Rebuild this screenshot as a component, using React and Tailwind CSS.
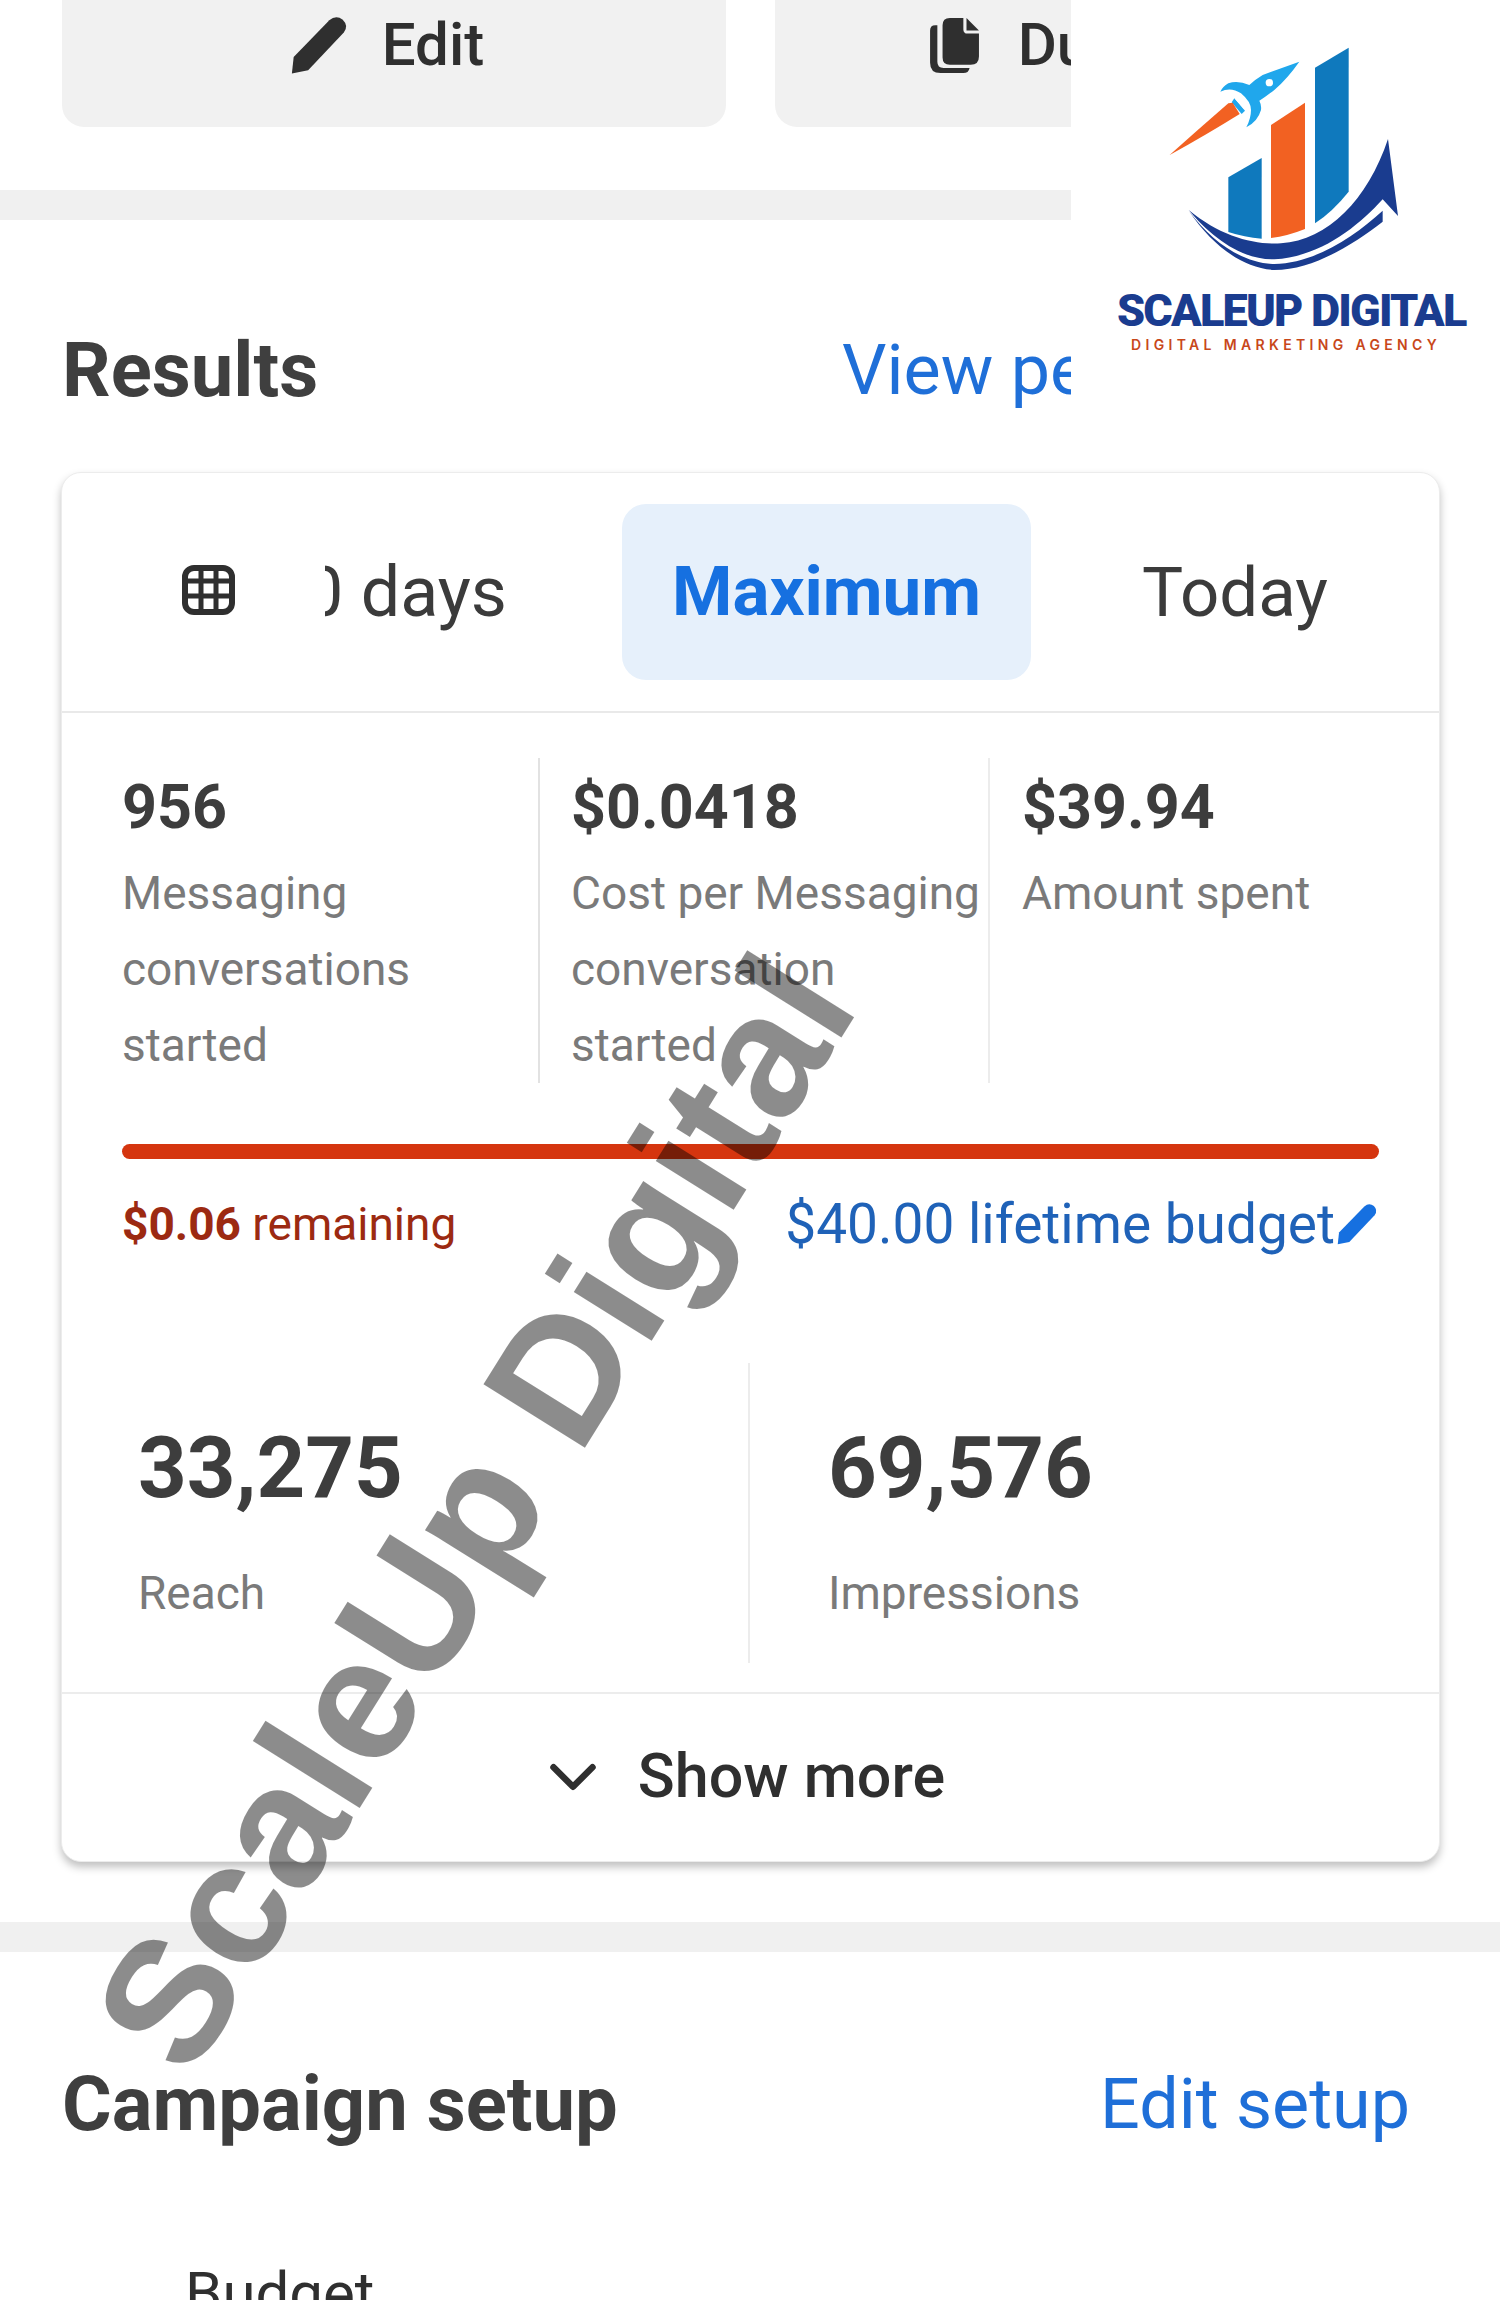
import { ChevronDown } from "lucide-react";

const PencilIcon = ({ className }) => (
  <svg viewBox="0 0 24 24" className={className} fill="currentColor">
    <path d="M1.5 23 L2.2 16.6 L16 2.4 Q18.6 0.2 21.2 2.2 Q23.6 4.6 21.6 7.2 L7.8 21.8 Z" />
  </svg>
);

const CopyIcon = ({ className }) => (
  <svg viewBox="0 0 50 54" className={className} fill="currentColor">
    <path d="M14 8 Q14 1 21 1 L34 1 L34 12 Q34 16 38 16 L49 16 L49 38 Q49 46 41 46 L21 46 Q14 46 14 39 Z" />
    <path d="M37 1 L49 13 L37 13 Z" />
    <path d="M2 13 Q2 8 7 8 L9 8 L9 43 Q9 49 15 49 L40 49 Q39 54 34 54 L12 54 Q2 54 2 44 Z" />
  </svg>
);

const CalendarIcon = () => (
  <svg viewBox="0 0 53 50" className="w-[53px] h-[50px] -mt-[5px] text-[#2f2f2f]" fill="none" stroke="currentColor">
    <rect x="3" y="3" width="47" height="44" rx="9" strokeWidth="6" />
    <path d="M3 16 H50 M3 31 H50 M19 5 V45 M34 5 V45" strokeWidth="5" />
  </svg>
);

const Logo = () => (
  <svg viewBox="0 0 840 750" className="absolute left-[70px] top-[30px] w-[280px] h-[250px]">
    <path d="M522 113 L623 53 L623 485 Q575 545 522 580 Z" fill="#0f79bd" />
    <path d="M390 285 L492 218 L492 597 Q440 618 390 624 Z" fill="#f26122" />
    <path d="M262 442 L362 384 L362 626 Q310 622 262 606 Z" fill="#0f79bd" />
    <path d="M143 540 C240 620 340 645 420 640 C560 630 680 510 741 327 L771 558 L725 508 C650 590 540 680 400 688 C300 690 210 620 143 540 Z" fill="#1a3c8f" />
    <path d="M145 545 C210 640 300 715 400 720 C520 720 640 640 725 575 L725 542 C640 620 520 700 400 702 C300 700 210 630 145 545 Z" fill="#1a3c8f" />
    <path d="M475 95 L365 135 Q340 150 325 165 Q290 150 262 160 Q245 170 238 185 Q270 170 300 190 Q330 215 330 240 Q330 265 316 292 Q350 275 360 240 Q362 225 355 212 Q375 200 400 180 Q440 145 475 95 Z" fill="#20a7ec" />
    <circle cx="385" cy="158" r="11" fill="#fff" />
    <path d="M280 205 L312 242 L302 252 L272 217 Z" fill="#20a7ec" />
    <path d="M283 206 L311 238" stroke="#fff" strokeWidth="3" />
    <path d="M86 375 Q170 300 262 220 L275 218 L296 252 Q200 312 86 375 Z" fill="#f26122" />
  </svg>
);

const Metric = ({ value, label, className }) => (
  <div className={className}>
    <div className="text-[61px] leading-[94px] font-bold text-[#3d3d3d] mt-[2px]">{value}</div>
    <div className="text-[46px] leading-[76px] text-[#7a7a7a] mt-[1px]">{label}</div>
  </div>
);

const App = () => {
  return (
    <div className="relative w-[1500px] h-[2300px] overflow-hidden bg-white font-['Roboto',sans-serif]">
      {/* top buttons, cut by the top of the page */}
      <div className="flex h-[127px] gap-[49px] pl-[62px]">
        <div className="w-[664px] bg-[#f1f1f1] rounded-b-[22px] flex items-center justify-center gap-[32px] pb-[38px] pr-[16px] text-[#2f2f2f]">
          <PencilIcon className="w-[62px] h-[62px]" />
          <span className="text-[60px] leading-none font-medium">Edit</span>
        </div>
        <div className="w-[664px] bg-[#f1f1f1] rounded-b-[22px] flex items-center justify-center gap-[38px] pb-[38px] pr-[16px] text-[#2f2f2f]">
          <CopyIcon className="w-[52px] h-[58px]" />
          <span className="text-[60px] leading-none font-medium">Duplicate</span>
        </div>
      </div>

      <div className="h-[30px] mt-[63px] bg-[#f0f0f0]" />

      <div className="h-[252px] pl-[62px] pt-[110px] flex">
        <h2 className="w-[780px] text-[76px] leading-[80px] font-bold text-[#3f3f3f]">Results</h2>
        <a className="text-[70px] leading-[80px] text-[#1f6fd8] whitespace-nowrap">View performance</a>
      </div>

      {/* results card */}
      <div className="relative w-[1379px] ml-[61px] h-[1390px] bg-white rounded-[20px] border border-[#ececec] shadow-[0_5px_8px_rgba(0,0,0,0.25)]">
        <div className="h-[240px] border-b-2 border-[#e9e9e9] flex items-center pl-[120px]">
          <CalendarIcon />
          <div className="relative w-[272px] text-right text-[70px] leading-none text-[#3b3b3b] whitespace-nowrap">
            30 days
            <span className="absolute left-0 top-0 w-[90px] h-full bg-white" />
          </div>
          <div className="ml-[115px] w-[409px] h-[176px] bg-[#e6f0fb] rounded-[24px] flex items-center justify-center text-[69px] font-bold text-[#1670e0]">Maximum</div>
          <div className="w-[408px] text-center text-[69px] leading-none text-[#3b3b3b]">Today</div>
        </div>

        <div className="flex pt-[45px] h-[370px]">
          <Metric className="w-[478px] pl-[60px] pr-[40px] border-r-2 border-[#e2e2e2]" value="956" label="Messaging conversations started" />
          <Metric className="w-[450px] pl-[31px] border-r-2 border-[#ececec]" value="$0.0418" label={<>Cost per Messaging<br />conversation<br />started</>} />
          <Metric className="pl-[32px]" value="$39.94" label="Amount spent" />
        </div>

        <div className="mx-[60px] mt-[61px]">
          <div className="h-[15px] rounded-full bg-[#d5350f]" />
          <div className="flex justify-between items-center mt-[36px] h-[60px]">
            <div className="text-[46px] text-[#9c2a12] -mt-[1px]"><span className="font-bold">$0.06</span> remaining</div>
            <div className="flex items-center text-[55px] text-[#1f62b8] -mt-[2px]">
              $40.00 lifetime budget
              <PencilIcon className="w-[44px] h-[44px] text-[#1670e0]" />
            </div>
          </div>
        </div>

        <div className="flex h-[300px] mt-[108px]">
          <div className="w-[688px] pl-[76px] border-r-2 border-[#ececec]">
            <div className="text-[85px] leading-[100px] font-bold text-[#3d3d3d] mt-[55px]">33,275</div>
            <div className="text-[46px] leading-[60px] text-[#7a7a7a] mt-[45px]">Reach</div>
          </div>
          <div className="pl-[78px]">
            <div className="text-[85px] leading-[100px] font-bold text-[#3d3d3d] mt-[55px]">69,576</div>
            <div className="text-[46px] leading-[60px] text-[#7a7a7a] mt-[45px]">Impressions</div>
          </div>
        </div>

        <div className="mt-[29px] h-[167px] border-t-2 border-[#ececec] flex items-center justify-center gap-[26px] pr-[22px] text-[#2f2f2f]">
          <ChevronDown className="w-[78px] h-[78px]" strokeWidth={2} />
          <span className="text-[61px] leading-none font-medium">Show more</span>
        </div>
      </div>

      <div className="h-[30px] mt-[60px] bg-[#f0f0f0]" />

      <div className="pl-[62px] pr-[90px] mt-[112px] flex justify-between">
        <h2 className="text-[76px] leading-[80px] font-bold text-[#3f3f3f]">Campaign setup</h2>
        <a className="text-[70px] leading-[80px] text-[#1f6fd8]">Edit setup</a>
      </div>
      <div className="pl-[185px] mt-[118px] text-[60px] leading-[64px] text-[#2f2f2f]">Budget</div>

      {/* agency logo box sits over the screenshot */}
      <div className="absolute right-0 top-0 w-[429px] h-[420px] bg-white">
        <Logo />
        <div className="absolute left-[46px] top-[287px] w-[350px] text-[45px] leading-[48px] font-black text-[#1a3c8f] tracking-[-0.04em] whitespace-nowrap">SCALEUP DIGITAL</div>
        <div className="absolute left-[60px] top-[337px] text-[14px] leading-[16px] font-semibold tracking-[0.31em] text-[#c8471a] whitespace-nowrap font-['Inter',sans-serif]">DIGITAL MARKETING AGENCY</div>
      </div>

      {/* watermark */}
      <div className="absolute left-[474px] top-[1512px] w-0 h-0 flex items-center justify-center -rotate-[58deg]">
        <span className="text-[174px] leading-none font-bold text-black/45 whitespace-nowrap font-['Liberation_Sans',sans-serif]">ScaleUp Digital</span>
      </div>
    </div>
  );
};

export default App;
